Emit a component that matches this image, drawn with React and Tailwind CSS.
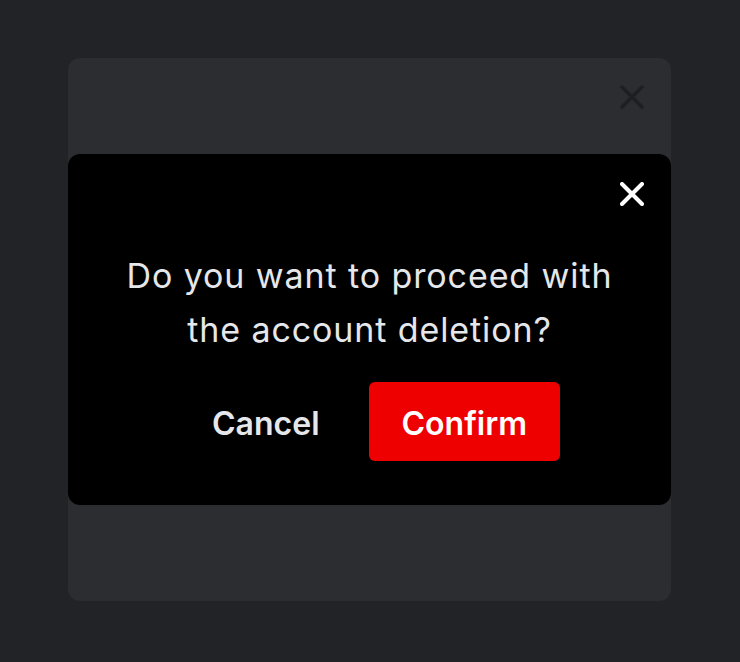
const XIcon = ({ className, stroke = 3.5 }) => (
  <svg viewBox="0 0 24 24" className={className} fill="none" stroke="currentColor" strokeWidth={stroke} strokeLinecap="round">
    <path d="M2 2 L22 22 M22 2 L2 22" />
  </svg>
);

export default function App() {
  return (
    <div className="min-h-[662px] w-full bg-[#212327] pt-[58px] pl-[68px] font-['Inter',sans-serif]">
      {/* background sheet */}
      <div className="relative flex h-[543px] w-[603px] flex-col rounded-xl bg-[#2b2d31] px-[27px] pt-[27px]">
        <div className="flex justify-end">
          <button className="text-[#1d1f23]">
            <XIcon className="h-6 w-6" stroke={3.5} />
          </button>
        </div>

        {/* confirm dialog on top */}
        <div className="absolute inset-x-0 top-[96px] flex flex-col rounded-xl bg-black px-[27px] pt-[28px] pb-[44px]">
          <div className="flex justify-end">
            <button className="text-white">
              <XIcon className="h-6 w-6" stroke={4} />
            </button>
          </div>
          <p className="mx-auto mt-[43px] w-[510px] text-center text-[34px] leading-[54px] tracking-[0.9px] text-gray-200">
            Do you want to proceed with the account deletion?
          </p>
          <div className="mt-[25px] flex justify-center gap-4">
            <button className="h-[79px] rounded-md px-[33px] pt-1 text-[32px] font-semibold text-gray-200">
              Cancel
            </button>
            <button className="h-[79px] rounded-md bg-[#ee0000] px-[33px] pt-1 text-[32px] font-semibold text-white">
              Confirm
            </button>
          </div>
        </div>
      </div>
    </div>
  );
}
